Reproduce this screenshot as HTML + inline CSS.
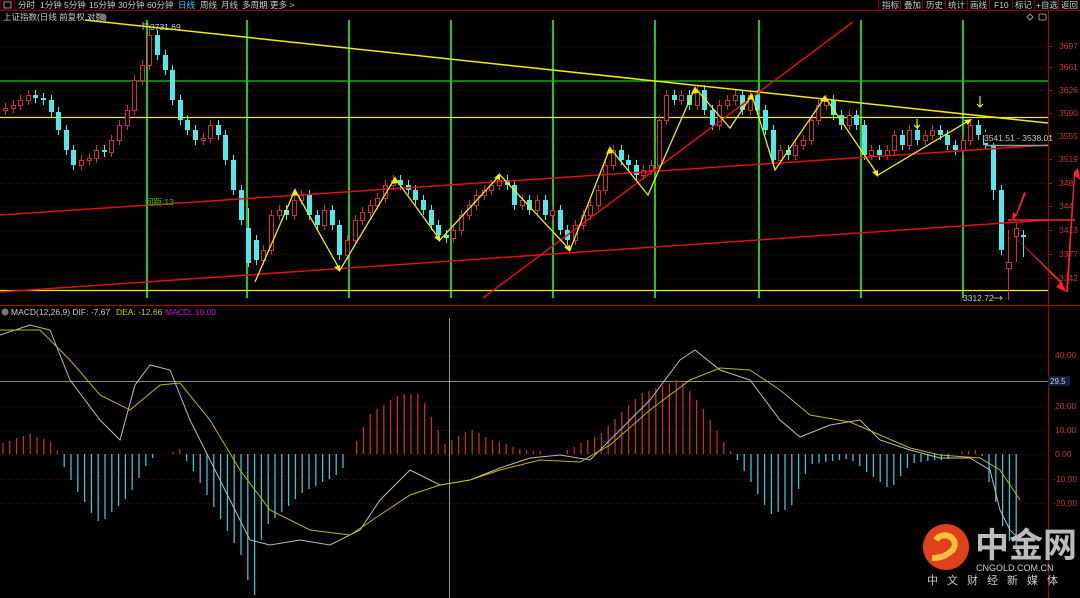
<!DOCTYPE html>
<html><head><meta charset="utf-8"><style>
html,body{margin:0;padding:0;background:#000;width:1080px;height:598px;overflow:hidden}
svg{display:block}
text{font-family:"Liberation Sans","Noto Sans CJK SC",sans-serif}
</style></head><body>
<svg width="1080" height="598" viewBox="0 0 1080 598" xmlns="http://www.w3.org/2000/svg">
<rect width="1080" height="598" fill="#000"/>
<line x1="0" y1="10.5" x2="1080" y2="10.5" stroke="#8b0000"/>
<rect x="1" y="0" width="14" height="10" fill="none" stroke="#8b0000"/>
<rect x="4" y="2" width="7" height="6" fill="none" stroke="#bbb" stroke-width="0.8"/>
<g font-size="8.5" fill="#ccc">
<text x="18" y="8">分时</text><text x="40" y="8">1分钟</text><text x="64" y="8">5分钟</text><text x="89" y="8">15分钟</text><text x="118" y="8">30分钟</text><text x="147" y="8">60分钟</text>
<text x="178" y="8" fill="#3cf">日线</text><text x="200" y="8">周线</text><text x="221" y="8">月线</text><text x="242" y="8">多周期</text><text x="270" y="8">更多 &gt;</text>
<text x="882" y="8">指标</text><text x="904" y="8">叠加</text><text x="926" y="8">历史</text><text x="948" y="8">统计</text><text x="970" y="8">画线</text><text x="994" y="8">F10</text><text x="1015" y="8">标记</text><text x="1036" y="8">+自选</text><text x="1061" y="8">返回</text>
</g>
<g stroke="#8b0000"><line x1="878.5" y1="0" x2="878.5" y2="10"/><line x1="900.5" y1="0" x2="900.5" y2="10"/><line x1="922.5" y1="0" x2="922.5" y2="10"/><line x1="945.5" y1="0" x2="945.5" y2="10"/><line x1="967.5" y1="0" x2="967.5" y2="10"/><line x1="989.5" y1="0" x2="989.5" y2="10"/><line x1="1012.5" y1="0" x2="1012.5" y2="10"/><line x1="1034.5" y1="0" x2="1034.5" y2="10"/><line x1="1058.5" y1="0" x2="1058.5" y2="10"/></g>
<text x="3" y="20" font-size="8.5" fill="#ccc">上证指数(日线 前复权 对数)</text>
<circle cx="103" cy="17" r="3.5" fill="#777"/>
<path d="M1027 17 l3 -3 l3 3 l-3 3z" fill="none" stroke="#bbb" stroke-width="0.8"/>
<rect x="1039" y="14" width="7" height="6" rx="1" fill="none" stroke="#bbb" stroke-width="0.8"/>
<line x1="1048.5" y1="11" x2="1048.5" y2="598" stroke="#a00"/>
<line x1="0" y1="305.5" x2="1080" y2="305.5" stroke="#a00"/>
<path stroke="#6a0000" stroke-dasharray="1 3" d="M0 46.5H1048M0 67.5H1048M0 90.5H1048M0 113.5H1048M0 136.5H1048M0 159.5H1048M0 183.5H1048M0 206.5H1048M0 230.5H1048M0 254.5H1048M0 278.5H1048M0 355.5H1048M0 406.5H1048M0 430.5H1048M0 454.5H1048M0 479.5H1048M0 503.5H1048"/>
<path stroke="#a00" d="M1048 46.5h4M1048 67.5h4M1048 90.5h4M1048 113.5h4M1048 136.5h4M1048 159.5h4M1048 183.5h4M1048 206.5h4M1048 230.5h4M1048 254.5h4M1048 278.5h4"/>
<g font-size="8.5" fill="#c33">
<text x="1059" y="49">3697</text><text x="1059" y="70">3661</text><text x="1059" y="93">3626</text><text x="1059" y="116">3590</text><text x="1059" y="139">3555</text><text x="1059" y="162">3519</text><text x="1059" y="186">348</text><text x="1059" y="209">344</text><text x="1059" y="233">3413</text><text x="1059" y="257">3377</text><text x="1059" y="281">3342</text>
<text x="1055" y="358">40.00</text><text x="1055" y="409">20.00</text><text x="1055" y="433">10.00</text><text x="1055" y="457">0.00</text><text x="1053" y="482">-10.00</text><text x="1053" y="506">-20.00</text>
</g>
<path stroke="#1ec81e" stroke-width="2" d="M147 20V298M247 20V298M349 20V298M451 20V298M553 20V298M655 20V298M759 20V298M861 20V298M963 20V298"/>
<line x1="0" y1="81" x2="1048" y2="81" stroke="#1ec81e" stroke-width="1.3"/>
<line x1="0" y1="117.5" x2="1048" y2="117.5" stroke="#ee0" stroke-width="1.3"/>
<line x1="0" y1="290.5" x2="1048" y2="290.5" stroke="#ee0" stroke-width="1.3"/>
<!-- cyan candles -->
<path stroke="#50e8e8" fill="none" d="M35.5 90V103M43.5 93V105M51.5 95V117M58.5 107V135M66.5 125V155M73.5 145V170M104.5 145V157M157.5 30V60M165.5 50V75M172.5 65V105M180.5 95V125M187.5 115V135M195.5 125V145M218.5 120V140M225.5 130V165M233.5 155V195M241.5 185V225M248.5 208V267M256.5 235V265M286.5 205V220M309.5 190V220M317.5 210V230M332.5 205V230M339.5 220V260M400.5 175V190M408.5 180V195M415.5 185V205M423.5 195V215M431.5 205V230M438.5 220V240M446.5 230V243M507.5 175V190M514.5 180V210M529.5 195V215M545.5 195V220M560.5 205V235M567.5 225V245M621.5 145V165M628.5 155V170M636.5 160V180M674.5 90V105M689.5 90V110M704.5 85V115M712.5 105V130M742.5 90V115M757.5 90V115M765.5 105V135M773.5 125V165M788.5 145V160M833.5 95V120M841.5 110V130M856.5 110V130M864.5 120V160M879.5 145V160M902.5 130V150M917.5 125V145M940.5 125V140M947.5 130V150M955.5 140V155M978.5 120V140M985.5 130V150M993.5 140V200M1001.5 185V255M1023.5 230V257"/>
<path fill="#50e8e8" d="M33 95h5v3h-5zM41 98h5v2h-5zM49 100h5v12h-5zM56 112h5v18h-5zM64 130h5v20h-5zM71 150h5v15h-5zM102 150h5v2h-5zM155 35h5v20h-5zM163 55h5v15h-5zM170 70h5v30h-5zM178 100h5v20h-5zM185 120h5v10h-5zM193 130h5v10h-5zM216 125h5v10h-5zM223 135h5v25h-5zM231 160h5v30h-5zM239 190h5v30h-5zM246 228h5v35h-5zM254 240h5v20h-5zM284 210h5v5h-5zM307 195h5v20h-5zM315 215h5v10h-5zM330 210h5v15h-5zM337 225h5v30h-5zM398 180h5v5h-5zM406 185h5v5h-5zM413 190h5v10h-5zM421 200h5v10h-5zM429 210h5v15h-5zM436 225h5v10h-5zM444 235h5v3h-5zM505 180h5v5h-5zM512 185h5v20h-5zM527 200h5v10h-5zM543 200h5v15h-5zM558 210h5v20h-5zM565 230h5v10h-5zM619 150h5v10h-5zM626 160h5v5h-5zM634 165h5v10h-5zM672 95h5v5h-5zM687 95h5v10h-5zM702 90h5v20h-5zM710 110h5v15h-5zM740 95h5v15h-5zM755 95h5v15h-5zM763 110h5v20h-5zM771 130h5v30h-5zM786 150h5v5h-5zM831 100h5v15h-5zM839 115h5v10h-5zM854 115h5v10h-5zM862 125h5v30h-5zM877 150h5v5h-5zM900 135h5v10h-5zM915 130h5v10h-5zM938 130h5v5h-5zM945 135h5v10h-5zM953 145h5v5h-5zM976 125h5v10h-5zM983 135h5v10h-5zM991 145h5v45h-5zM999 190h5v60h-5zM1021 235h5v2h-5z"/>
<!-- red candles -->
<path stroke="#d03030" fill="none" d="M5.5 103V115M13.5 100V113M20.5 95V110M28.5 90V105M81.5 155V170M89.5 153V165M96.5 145V163M111.5 135V157M119.5 120V145M127.5 105V130M134.5 75V115M142.5 60V85M149.5 25V70M203.5 133V145M210.5 120V143M263.5 245V265M271.5 210V255M279.5 205V220M294.5 195V220M301.5 190V205M324.5 205V230M347.5 235V260M355.5 215V245M362.5 207V225M370.5 200V217M377.5 193V210M385.5 180V203M393.5 175V190M453.5 225V243M461.5 210V235M469.5 200V220M476.5 190V210M484.5 185V200M491.5 180V195M499.5 175V190M522.5 195V210M537.5 195V215M552.5 205V220M575.5 220V245M583.5 210V230M590.5 200V220M598.5 185V210M605.5 160V195M613.5 145V170M643.5 165V180M651.5 160V175M659.5 115V170M666.5 90V125M681.5 90V105M697.5 85V110M719.5 100V130M727.5 95V110M735.5 90V105M750.5 90V115M780.5 145V165M795.5 140V160M803.5 135V150M811.5 115V145M818.5 100V125M826.5 95V110M849.5 110V130M871.5 145V160M887.5 145V160M894.5 130V155M909.5 125V150M925.5 130V145M932.5 125V140M963.5 135V155M970.5 120V145M1008.5 230V300M1016.5 223V262"/>
<path stroke="#d03030" fill="#000" d="M3.5 108.5h4v2h-4zM11.5 105.5h4v3h-4zM18.5 100.5h4v5h-4zM26.5 95.5h4v5h-4zM79.5 160.5h4v5h-4zM87.5 158.5h4v2h-4zM94.5 150.5h4v8h-4zM109.5 140.5h4v12h-4zM117.5 125.5h4v15h-4zM125.5 110.5h4v15h-4zM132.5 80.5h4v30h-4zM140.5 65.5h4v15h-4zM147.5 35.5h4v30h-4zM201.5 138.5h4v2h-4zM208.5 125.5h4v13h-4zM261.5 250.5h4v10h-4zM269.5 215.5h4v35h-4zM277.5 210.5h4v5h-4zM292.5 200.5h4v15h-4zM299.5 195.5h4v5h-4zM322.5 210.5h4v15h-4zM345.5 240.5h4v15h-4zM353.5 220.5h4v20h-4zM360.5 212.5h4v8h-4zM368.5 205.5h4v7h-4zM375.5 198.5h4v7h-4zM383.5 185.5h4v13h-4zM391.5 180.5h4v5h-4zM451.5 230.5h4v8h-4zM459.5 215.5h4v15h-4zM467.5 205.5h4v10h-4zM474.5 195.5h4v10h-4zM482.5 190.5h4v5h-4zM489.5 185.5h4v5h-4zM497.5 180.5h4v5h-4zM520.5 200.5h4v5h-4zM535.5 200.5h4v10h-4zM550.5 210.5h4v5h-4zM573.5 225.5h4v15h-4zM581.5 215.5h4v10h-4zM588.5 205.5h4v10h-4zM596.5 190.5h4v15h-4zM603.5 165.5h4v25h-4zM611.5 150.5h4v15h-4zM641.5 170.5h4v5h-4zM649.5 165.5h4v5h-4zM657.5 120.5h4v45h-4zM664.5 95.5h4v25h-4zM679.5 95.5h4v5h-4zM695.5 90.5h4v15h-4zM717.5 105.5h4v20h-4zM725.5 100.5h4v5h-4zM733.5 95.5h4v5h-4zM748.5 95.5h4v15h-4zM778.5 150.5h4v10h-4zM793.5 145.5h4v10h-4zM801.5 140.5h4v5h-4zM809.5 120.5h4v20h-4zM816.5 105.5h4v15h-4zM824.5 100.5h4v5h-4zM847.5 115.5h4v10h-4zM869.5 150.5h4v5h-4zM885.5 150.5h4v5h-4zM892.5 135.5h4v15h-4zM907.5 130.5h4v15h-4zM923.5 135.5h4v5h-4zM930.5 130.5h4v5h-4zM961.5 140.5h4v10h-4zM968.5 125.5h4v15h-4zM1006.5 262.5h5v6h-5zM1014.5 228.5h4v8h-4z"/>
<line x1="85" y1="20" x2="1048" y2="123" stroke="#ee0" stroke-width="1.5"/>
<line x1="0" y1="215" x2="1048" y2="145" stroke="#e01010" stroke-width="1.5"/>
<line x1="0" y1="292" x2="1048" y2="220" stroke="#e01010" stroke-width="1.5"/>
<line x1="483" y1="298" x2="853" y2="22" stroke="#e01010" stroke-width="1.5"/>
<line x1="985" y1="145.5" x2="1048" y2="145.5" stroke="#999" stroke-width="1.5"/>
<line x1="1008" y1="220" x2="1075" y2="220" stroke="#f22" stroke-width="1.5"/>
<polyline fill="none" stroke="#ee0" stroke-width="1.3" points="255,282 295,190 340,270 395,178 440,240 500,175 570,250 610,148 648,195 695,88 730,128 752,95 775,170 825,97 878,175 970,120"/>
<g fill="#ee0"><path d="M295 188 l-4 8 l7 -1z"/><path d="M340 272 l-6 -5 l6 -2z"/><path d="M395 176 l-4 8 l7 -1z"/><path d="M440 242 l-6 -5 l6 -2z"/><path d="M500 173 l-6 5 l6 2z"/><path d="M570 252 l-6 -5 l6 -2z"/><path d="M610 146 l-4 8 l7 -1z"/><path d="M695 86 l-4 8 l7 -1z"/><path d="M752 93 l-5 6 l7 1z"/><path d="M825 95 l-5 6 l7 1z"/><path d="M878 177 l-6 -5 l6 -2z"/><path d="M972 119 l-8 1 l4 5z"/></g>
<g stroke="#ee0" stroke-width="1.2" fill="none"><path d="M917 119 v9 M914 125 l3 3 l3 -3"/><path d="M980 96 v11 M977 104 l3 3 l3 -3"/></g>
<g fill="#f22"><path d="M1008 230 L1062 282 L1066 292 L1056 287 L1060 283 L1010 232z"/><path d="M1066 292 L1074 172 L1078 168 L1080 180 L1075 176 L1068 292z"/><path d="M1026 193 L1017 215 L1012 221 L1013 212 L1016 214 L1024 192z"/></g>
<text x="150" y="30" font-size="8.5" fill="#ccc">3731.69</text>
<path d="M143 22 v8 M143 24 l6 0" stroke="#ccc" stroke-width="0.8" fill="none"/>
<text x="145" y="205" font-size="8.5" fill="#1ec81e">间距:13</text>
<rect x="984" y="132" width="64" height="11" fill="#000"/>
<text x="984" y="141" font-size="8.5" fill="#ccc">3541.51 - 3538.01</text>
<text x="963" y="301" font-size="8.5" fill="#ccc">3312.72</text>
<path d="M993 298 h9 l-2 -2 m2 2 l-2 2" stroke="#ccc" stroke-width="0.8" fill="none"/>
<!-- MACD -->
<circle cx="5" cy="312" r="3.5" fill="#777"/>
<text x="11" y="315" font-size="8.5" fill="#ccc">MACD(12,26,9) DIF: -7.67</text>
<text x="116" y="315" font-size="8.5" fill="#cc0">DEA: -12.66</text>
<text x="165" y="315" font-size="8.5" fill="#d0d">MACD: 10.00</text>
<line x1="0" y1="381.5" x2="1048" y2="381.5" stroke="#888"/>
<rect x="1048" y="376" width="22" height="10" fill="#124"/>
<text x="1050" y="384" font-size="8" fill="#ccc">29.5</text>
<line x1="449.5" y1="318" x2="449.5" y2="598" stroke="#bbb" stroke-width="0.8"/>
<path stroke="#c03030" stroke-width="1.3" d="M3 454V443M9.8 454V441M16.6 454V438M23.4 454V436M30.2 454V434M37 454V437M43.8 454V439M50.6 454V442M57.4 454V450M173 454V452M179.8 454V449M356.6 454V441M363.4 454V427M370.2 454V414M377 454V409M383.8 454V405M390.6 454V400M397.4 454V396M404.2 454V394M411 454V394M417.8 454V394M424.6 454V403M431.4 454V417M438.2 454V430M445 454V444M451.8 454V440M458.6 454V436M465.4 454V432M472.2 454V430M479 454V433M485.8 454V437M492.6 454V440M499.4 454V442M506.2 454V444M513 454V447M519.8 454V449M526.6 454V450M533.4 454V451M540.2 454V451M567.4 454V450M574.2 454V447M581 454V443M587.8 454V440M594.6 454V437M601.4 454V433M608.2 454V426M615 454V419M621.8 454V412M628.6 454V405M635.4 454V399M642.2 454V393M649 454V391M655.8 454V388M662.6 454V386M669.4 454V383M676.2 454V380M683 454V383M689.8 454V391M696.6 454V400M703.4 454V409M710.2 454V420M717 454V431M723.8 454V442M730.6 454V451M961.8 454V452M968.6 454V451M975.4 454V450"/>
<path stroke="#40c0d0" stroke-width="1.3" d="M64.2 454V467M71 454V480M77.8 454V492M84.6 454V502M91.4 454V513M98.2 454V521M105 454V519M111.8 454V512M118.6 454V506M125.4 454V499M132.2 454V490M139 454V478M145.8 454V466M152.6 454V458M186.6 454V461M193.4 454V471M200.2 454V483M207 454V495M213.8 454V507M220.6 454V519M227.4 454V531M234.2 454V543M241 454V555M247.8 454V580M254.6 454V595M261.4 454V540M268.2 454V524M275 454V518M281.8 454V512M288.6 454V506M295.4 454V499M302.2 454V493M309 454V489M315.8 454V486M322.6 454V482M329.4 454V479M336.2 454V475M343 454V468M737.4 454V460M744.2 454V471M751 454V482M757.8 454V494M764.6 454V505M771.4 454V514M778.2 454V512M785 454V510M791.8 454V505M798.6 454V489M805.4 454V474M812.2 454V464M819 454V463M825.8 454V462M832.6 454V461M839.4 454V460M846.2 454V459M853 454V461M859.8 454V466M866.6 454V472M873.4 454V477M880.2 454V482M887 454V487M893.8 454V485M900.6 454V476M907.4 454V468M914.2 454V463M921 454V462M927.8 454V461M934.6 454V460M941.4 454V460M948.2 454V459M982.2 454V456M989 454V482M995.8 454V502M1002.6 454V526M1009.4 454V541M1016.2 454V548"/>
<polyline fill="none" stroke="#bbb" stroke-width="1" points="0,335 30,325 50,330 70,380 100,420 120,440 135,385 150,365 170,370 190,420 220,480 250,540 270,545 300,540 330,545 360,530 380,500 410,470 440,485 470,480 500,468 530,458 560,455 590,460 620,430 650,400 680,360 695,350 720,370 750,380 780,420 800,437 830,425 860,420 880,440 910,450 940,458 970,458 990,470 1000,510 1010,530 1020,540"/>
<polyline fill="none" stroke="#bb0" stroke-width="1" points="0,330 40,330 70,360 100,395 130,410 160,385 180,383 210,420 240,470 270,510 310,530 350,535 380,515 410,495 440,485 470,480 500,470 540,460 580,462 610,445 650,410 690,380 720,368 750,370 780,390 810,415 850,422 880,435 910,448 940,455 980,458 1000,470 1020,500"/>
<circle cx="946" cy="547" r="23" fill="#e0401c"/>
<path d="M936 540 a10 9 0 1 1 14 12 q-6 6 -18 6" fill="none" stroke="#f7c040" stroke-width="6"/>
<text x="975" y="557" font-size="34" font-weight="bold" fill="#bbb" font-family="Noto Sans CJK SC,sans-serif">中金网</text>
<text x="976" y="571" font-size="9" fill="#ccc">CNGOLD.COM.CN</text>
<text x="927" y="584" font-size="11" fill="#ccc" letter-spacing="9">中文财经新媒体</text>
</svg>
</body></html>
